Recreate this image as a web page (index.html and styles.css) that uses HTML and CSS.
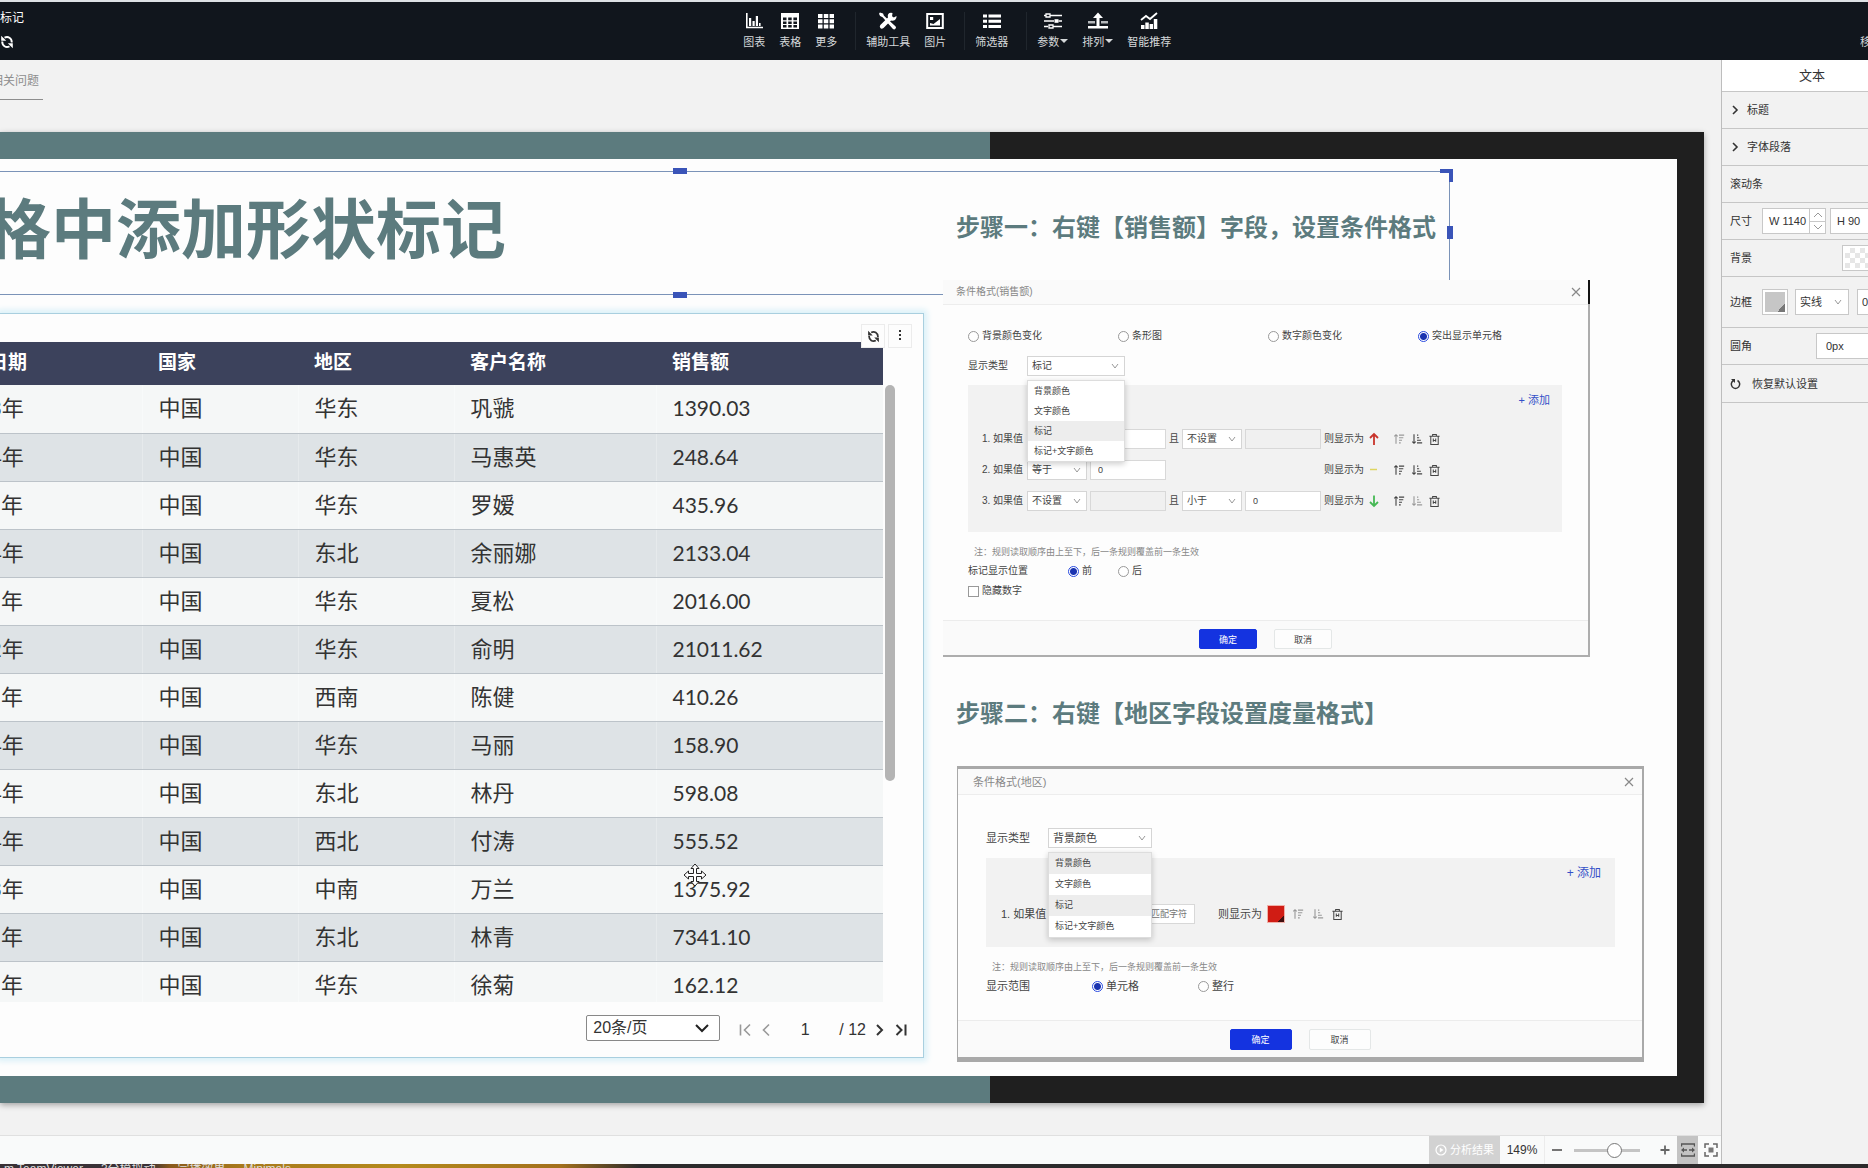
FILE: index.html
```html
<!DOCTYPE html>
<html lang="zh-CN">
<head>
<meta charset="utf-8">
<title>形状标记</title>
<link rel="stylesheet" href="styles.css">
</head>
<body>
<svg class="sprite" aria-hidden="true">
  <symbol id="i-refresh" viewBox="0 0 14 14"><path d="M4.500 2.700C8 1 11.800 3 11.800 7.500M9.500 11.300C6 13 2.200 11 2.200 6.500" fill="none" stroke="currentColor" stroke-width="1.900"/><path d="M1.200.8v5h5zM12.800 13.200v-5h-5z" fill="currentColor"/></symbol>
  <symbol id="i-up" viewBox="0 0 14 14"><path d="M3.500 12.500V2M1.500 4l2-2 2 2M7 2.500h6M7 5.500h5M7 8.500h3.500M7 11.500h2" fill="none" stroke="currentColor" stroke-width="1.300"/></symbol>
  <symbol id="i-down" viewBox="0 0 14 14"><path d="M3.500 1.500V12M1.500 10l2 2 2-2M7 2.500h1.500M7 5.500h2.500M7 8.500h4.500M7 11.500h6" fill="none" stroke="currentColor" stroke-width="1.300"/></symbol>
  <symbol id="i-trash" viewBox="0 0 14 14"><path d="M1.500 3.500h11M5 3.500v-2h4v2M3 3.500v9h8v-9M5.700 6v3.500M8.300 6v3.500M5.500 8h3" fill="none" stroke="currentColor" stroke-width="1.100"/></symbol>
  <symbol id="i-close" viewBox="0 0 10 10"><path d="M1 1l8 8M9 1l-8 8" fill="none" stroke="currentColor" stroke-width="1.200"/></symbol>
  <symbol id="i-right" viewBox="0 0 10 10"><path d="M3 1l4 4-4 4" fill="none" stroke="currentColor" stroke-width="1.600"/></symbol>
</svg>

<header class="topbar">
  <div class="brand">
    <span class="doc-name">标记</span>
    <button class="bare" aria-label="刷新"><svg width="14" height="14"><use href="#i-refresh"/></svg></button>
  </div>
  <nav class="tools">
    <div class="tool-group">
      <button class="tool"><svg width="18" height="18" viewBox="0 0 18 18"><path d="M1.800 1v14.500H18" fill="none" stroke="#fff" stroke-width="1.600"/><path d="M4 6h2.200v8H4zM7.500 9h2.200v5H7.500zM10.800 4H13v10h-2.200zM14 11h1.600v3H14z" fill="#fff"/></svg>图表</button>
      <button class="tool"><svg width="18" height="18" viewBox="0 0 18 18"><path d="M0 1h18v16H0z" fill="#fff"/><path d="M2 5.500h3.500v2.700H2zM7.200 5.500h3.500v2.700H7.200zM12.400 5.500H16v2.700h-3.600zM2 9.400h3.500v2.500H2zM7.200 9.400h3.500v2.500H7.200zM12.400 9.400H16v2.500h-3.600zM2 13.100h3.500v2.400H2zM7.200 13.100h3.500v2.400H7.200zM12.400 13.100H16v2.400h-3.600z" fill="#11161d"/></svg>表格</button>
      <button class="tool"><svg width="18" height="18" viewBox="0 0 18 18"><path d="M1 2h4.500v4H1zM6.800 2h4.500v4H6.800zM12.600 2H17v4h-4.400zM1 7.300h4.500v4H1zM6.800 7.300h4.500v4H6.800zM12.600 7.300H17v4h-4.400zM1 12.600h4.500v4H1zM6.800 12.600h4.500v4H6.800zM12.600 12.600H17v4h-4.400z" fill="#fff"/></svg>更多</button>
    </div>
    <div class="tool-group">
      <button class="tool"><svg width="20" height="20" viewBox="0 0 20 20"><path d="M1 .5l3.500 1.200 1 2.600L18.500 16q1 1.500-.3 2.700t-2.700.1L4 5.800 1.200 4.500 0 2z" fill="#fff"/><path d="M19.500 4.500l-3 1.700-2-1.500.5-3.700q-3.200-.8-4.700 1.200-1 1.800-.3 3.800L1.500 14.500q-1.300 1.700 0 3.400t3.500 0l8.400-8.400q2.200.7 4.400-.6 2-1.800 1.700-4.400z" fill="#fff"/></svg>辅助工具</button>
      <button class="tool"><svg width="18" height="18" viewBox="0 0 18 18"><path d="M1.200 2h15.600v14H1.200z" fill="none" stroke="#fff" stroke-width="2"/><path d="M4 5h3.200v3H4zM4 13v-2l3.500 1L14 7v6.500H4z" fill="#fff"/></svg>图片</button>
    </div>
    <div class="tool-group">
      <button class="tool"><svg width="18" height="18" viewBox="0 0 18 18"><path d="M0 2.500h4v3H0zM5.500 2.500H18v3H5.500zM0 7.700h4v3H0zM5.500 7.700H18v3H5.500zM0 13h4v3H0zM5.500 13H18v3H5.500z" fill="#fff"/></svg>筛选器</button>
    </div>
    <div class="tool-group">
      <button class="tool"><svg width="18" height="18" viewBox="0 0 18 18"><path d="M0 3.500h2M6 3.500h12M0 9h10M14.500 9H18M0 14.500h4M9 14.500h9" stroke="#fff" stroke-width="1.500"/><path d="M2 2h4v3H2zM5 13h4v3H5z" fill="none" stroke="#fff" stroke-width="1.300"/><path d="M10.500 7.200h4v3.600h-4z" fill="#fff"/></svg><span>参数<i class="caret"></i></span></button>
      <button class="tool"><svg width="20" height="18" viewBox="0 0 20 18"><path d="M0 9h7v2.500H0zM13 9h7v2.500h-7z" fill="#b5b8bb"/><path d="M10 .5L5 6h3.500v8h3V6H15zM0 14h20v2.500H0z" fill="#fff"/></svg><span>排列<i class="caret"></i></span></button>
      <button class="tool"><svg width="18" height="18" viewBox="0 0 18 18"><path d="M1 8l5-4 4 3 7-6" fill="none" stroke="#fff" stroke-width="1.800"/><path d="M1 13h3.500v4H1zM5.300 10.500h3.500V17H5.300zM9.600 12H13v5H9.600zM13.800 7h3.500v10h-3.500z" fill="#fff"/></svg>智能推荐</button>
    </div>
  </nav>
  <div class="topbar-end"><span>移</span></div>
</header>

<div class="workspace">
  <main class="stage">
    <div class="tabs"><a class="tab" href="#related"><span>相关问题</span></a></div>

    <div class="slide">
      <div class="sheet">
        <div class="selection"><i class="h top"></i><i class="h bottom"></i><i class="h side"></i><i class="corner"></i></div>

        <section class="left">
          <h1 class="title">格中添加形状标记</h1>
          <div class="widget">
            <div class="widget-tools">
              <button aria-label="刷新"><svg width="13" height="13"><use href="#i-refresh"/></svg></button>
              <button aria-label="更多"><svg width="4" height="14" viewBox="0 0 4 14"><path d="M1 1h2v2H1zM1 5h2v2H1zM1 9h2v2H1z" fill="#333"/></svg></button>
            </div>
            <div class="scroller">
              <table class="data">
                <colgroup><col class="c-year"><col class="c-area"><col class="c-area"><col class="c-name"><col></colgroup>
                <thead><tr><th>日期</th><th>国家</th><th>地区</th><th>客户名称</th><th>销售额</th></tr></thead>
                <tbody>
                  <tr><td>3年</td><td>中国</td><td>华东</td><td>巩虢</td><td>1390.03</td></tr>
                  <tr><td>4年</td><td>中国</td><td>华东</td><td>马惠英</td><td>248.64</td></tr>
                  <tr><td class="bare-year">年</td><td>中国</td><td>华东</td><td>罗嫒</td><td>435.96</td></tr>
                  <tr><td>4年</td><td>中国</td><td>东北</td><td>余丽娜</td><td>2133.04</td></tr>
                  <tr><td class="bare-year">年</td><td>中国</td><td>华东</td><td>夏松</td><td>2016.00</td></tr>
                  <tr><td>2年</td><td>中国</td><td>华东</td><td>俞明</td><td>21011.62</td></tr>
                  <tr><td class="bare-year">年</td><td>中国</td><td>西南</td><td>陈健</td><td>410.26</td></tr>
                  <tr><td>4年</td><td>中国</td><td>华东</td><td>马丽</td><td>158.90</td></tr>
                  <tr><td>4年</td><td>中国</td><td>东北</td><td>林丹</td><td>598.08</td></tr>
                  <tr><td>4年</td><td>中国</td><td>西北</td><td>付涛</td><td>555.52</td></tr>
                  <tr><td>3年</td><td>中国</td><td>中南</td><td>万兰</td><td>1375.92</td></tr>
                  <tr><td class="bare-year">年</td><td>中国</td><td>东北</td><td>林青</td><td>7341.10</td></tr>
                  <tr><td class="bare-year">年</td><td>中国</td><td>华东</td><td>徐菊</td><td>162.12</td></tr>
                </tbody>
              </table>
              <div class="rail"><i></i></div>
            </div>
            <div class="pager">
              <select aria-label="每页条数"><option>20条/页</option></select>
              <button class="bare off" aria-label="首页"><svg width="12" height="14" viewBox="0 0 12 14"><path d="M1.500 1.500v11M11 1.500L5.500 7l5.500 5.500" fill="none" stroke="currentColor" stroke-width="1.600"/></svg></button>
              <button class="bare off" aria-label="上一页"><svg width="12" height="14" viewBox="0 0 12 14"><path d="M9 1.500L3.500 7 9 12.500" fill="none" stroke="currentColor" stroke-width="1.600"/></svg></button>
              <input value="1" aria-label="页码">
              <span>/ 12</span>
              <button class="bare" aria-label="下一页"><svg width="12" height="14" viewBox="0 0 12 14"><path d="M3 2l5 5-5 5" fill="none" stroke="currentColor" stroke-width="2"/></svg></button>
              <button class="bare" aria-label="末页"><svg width="12" height="14" viewBox="0 0 12 14"><path d="M1.500 2l5 5-5 5M10.500 1.500v11" fill="none" stroke="currentColor" stroke-width="2"/></svg></button>
            </div>
          </div>
        </section>

        <section class="right">
          <h2 class="step">步骤一：右键【销售额】字段，设置条件格式</h2>
          <div class="dialog d1">
            <div class="d-head"><span>条件格式(销售额)</span><button class="bare" aria-label="关闭"><svg width="10" height="10"><use href="#i-close"/></svg></button></div>
            <div class="d-body">
              <div class="modes">
                <label><input type="radio" name="mode">背景颜色变化</label>
                <label><input type="radio" name="mode">条形图</label>
                <label><input type="radio" name="mode">数字颜色变化</label>
                <label><input type="radio" name="mode" checked>突出显示单元格</label>
              </div>
              <div class="type-row">
                <label for="type1">显示类型</label>
                <div class="combo">
                  <select id="type1"><option>标记</option></select>
                  <ul class="menu"><li>背景颜色</li><li>文字颜色</li><li class="on">标记</li><li>标记+文字颜色</li></ul>
                </div>
              </div>
              <div class="rules">
                <div class="add"><a href="#add">+ 添加</a></div>
                <div class="rule">
                  <span class="no">1. 如果值</span>
                  <select aria-label="条件"><option></option></select><input aria-label="值">
                  <span>且</span><select aria-label="条件二"><option>不设置</option></select><input aria-label="值二" disabled>
                  <span>则显示为</span><svg class="mark" width="12" height="14" viewBox="0 0 12 14"><path d="M6 13V2.500M2 6l4-4 4 4" fill="none" stroke="#c8332b" stroke-width="1.800"/></svg>
                  <button class="bare off" aria-label="上移"><svg width="12" height="12"><use href="#i-up"/></svg></button><button class="bare" aria-label="下移"><svg width="12" height="12"><use href="#i-down"/></svg></button><button class="bare" aria-label="删除"><svg width="13" height="13"><use href="#i-trash"/></svg></button>
                </div>
                <div class="rule">
                  <span class="no">2. 如果值</span>
                  <select aria-label="条件"><option>等于</option></select><input aria-label="值" value="0">
                  <span class="then">则显示为</span><svg class="mark" width="12" height="14" viewBox="0 0 12 14"><path d="M2 6.500h7" stroke="#dfd560" stroke-width="1.500"/></svg>
                  <button class="bare" aria-label="上移"><svg width="12" height="12"><use href="#i-up"/></svg></button><button class="bare" aria-label="下移"><svg width="12" height="12"><use href="#i-down"/></svg></button><button class="bare" aria-label="删除"><svg width="13" height="13"><use href="#i-trash"/></svg></button>
                </div>
                <div class="rule">
                  <span class="no">3. 如果值</span>
                  <select aria-label="条件"><option>不设置</option></select><input aria-label="值" disabled>
                  <span>且</span><select aria-label="条件二"><option>小于</option></select><input aria-label="值二" value="0">
                  <span>则显示为</span><svg class="mark" width="12" height="14" viewBox="0 0 12 14"><path d="M6 1.500V12M2 8l4 4 4-4" fill="none" stroke="#45b854" stroke-width="1.800"/></svg>
                  <button class="bare" aria-label="上移"><svg width="12" height="12"><use href="#i-up"/></svg></button><button class="bare off" aria-label="下移"><svg width="12" height="12"><use href="#i-down"/></svg></button><button class="bare" aria-label="删除"><svg width="13" height="13"><use href="#i-trash"/></svg></button>
                </div>
              </div>
              <p class="note">注：规则读取顺序由上至下，后一条规则覆盖前一条生效</p>
              <div class="scope"><span>标记显示位置</span><label><input type="radio" name="pos" checked>前</label><label><input type="radio" name="pos">后</label></div>
              <div class="scope"><label><input type="checkbox">隐藏数字</label></div>
            </div>
            <div class="d-foot"><button class="ok">确定</button><button class="cancel">取消</button></div>
          </div>

          <h2 class="step">步骤二：右键【地区字段设置度量格式】</h2>
          <div class="dialog d2">
            <div class="d-head"><span>条件格式(地区)</span><button class="bare" aria-label="关闭"><svg width="10" height="10"><use href="#i-close"/></svg></button></div>
            <div class="d-body">
              <div class="type-row">
                <label for="type2">显示类型</label>
                <div class="combo">
                  <select id="type2"><option>背景颜色</option></select>
                  <ul class="menu"><li class="on">背景颜色</li><li>文字颜色</li><li class="on">标记</li><li>标记+文字颜色</li></ul>
                </div>
              </div>
              <div class="rules">
                <div class="add"><a href="#add2">+ 添加</a></div>
                <div class="rule">
                  <span class="no">1. 如果值</span>
                  <input aria-label="匹配" placeholder="匹配字符">
                  <span>则显示为</span><button class="swatch red" aria-label="颜色"></button>
                  <button class="bare off" aria-label="上移"><svg width="12" height="12"><use href="#i-up"/></svg></button><button class="bare off" aria-label="下移"><svg width="12" height="12"><use href="#i-down"/></svg></button><button class="bare" aria-label="删除"><svg width="13" height="13"><use href="#i-trash"/></svg></button>
                </div>
              </div>
              <p class="note">注：规则读取顺序由上至下，后一条规则覆盖前一条生效</p>
              <div class="scope"><span>显示范围</span><label><input type="radio" name="scope" checked>单元格</label><label><input type="radio" name="scope">整行</label></div>
            </div>
            <div class="d-foot"><button class="ok">确定</button><button class="cancel">取消</button></div>
          </div>
        </section>

        <svg class="pointer" width="24" height="24" viewBox="0 0 24 24"><path d="M12 1l4 4.500h-2.500v5h5V8L23 12l-4.500 4v-2.500h-5v5H16L12 23l-4-4.500h2.500v-5h-5V16L1 12l4.500-4v2.500h5v-5H8z" fill="#fff" stroke="#222" stroke-width="1"/></svg>
      </div>
    </div>

    <footer class="status">
      <button class="result"><svg width="12" height="12" viewBox="0 0 12 12"><circle cx="6" cy="6" r="5" fill="none" stroke="#fff" stroke-width="1.200"/><path d="M4.800 3.500v5L8.500 6z" fill="#fff"/></svg>分析结果</button>
      <span class="zoom">149%</span>
      <button class="bare step-btn" aria-label="缩小"><svg width="12" height="12" viewBox="0 0 12 12"><path d="M1 6h10" stroke="#666" stroke-width="1.800"/></svg></button>
      <input class="slider" type="range" min="0" max="100" value="64" aria-label="缩放">
      <button class="bare step-btn" aria-label="放大"><svg width="12" height="12" viewBox="0 0 12 12"><path d="M1.500 6h9M6 1.500v9" stroke="#666" stroke-width="1.800"/></svg></button>
      <button class="fit on" aria-label="适应宽度"><svg width="14" height="14" viewBox="0 0 14 14"><path d="M.5 3.500V1h13v2.500M.5 10.500V13h13v-2.500M2 7h4M8 7h4" fill="none" stroke="#555" stroke-width="1.400"/><path d="M0 7l3-2.500v5zM14 7l-3-2.500v5z" fill="#555"/></svg></button>
      <button class="fit" aria-label="适应页面"><svg width="14" height="14" viewBox="0 0 14 14"><path d="M1 5V1h4M9 1h4v4M13 9v4H9M5 13H1V9" fill="none" stroke="#666" stroke-width="1.500"/><path d="M4.500 4.500h5v5h-5z" fill="#777"/></svg></button>
    </footer>
  </main>

  <aside class="panel">
    <div class="panel-inner">
      <div class="p-tab">文本</div>
      <div class="p-row fold"><svg width="10" height="10"><use href="#i-right"/></svg>标题</div>
      <div class="p-row fold"><svg width="10" height="10"><use href="#i-right"/></svg>字体段落</div>
      <div class="p-row">滚动条</div>
      <div class="p-row"><span class="p-name">尺寸</span>
        <label class="num">W<input value="1140"><span class="spin"><button aria-label="增加"></button><button aria-label="减少"></button></span></label>
        <label class="num">H<input value="90"></label></div>
      <div class="p-row"><span class="p-name">背景</span><button class="swatch clear" aria-label="背景颜色"></button></div>
      <div class="p-row tall"><span class="p-name">边框</span><button class="swatch grey" aria-label="边框颜色"></button><select aria-label="线型"><option>实线</option></select><input class="px w" value="0px" aria-label="边框宽度"></div>
      <div class="p-row"><label class="p-name" for="radius">圆角</label><input id="radius" class="px" value="0px"></div>
      <div class="p-row reset"><svg width="11" height="12" viewBox="0 0 11 12"><path d="M3.500 2.500a4.200 4.200 0 1 0 4 0" fill="none" stroke="#333" stroke-width="1.500"/><path d="M1 1h4v4z" fill="#333"/></svg>恢复默认设置</div>
    </div>
  </aside>
</div>

<div class="taskbar"><span>m TeamViewer</span><span>3分模拟动-</span><span>完播效果</span><span>Minimals</span></div>
</body>
</html>
```

FILE: styles.css
```css
* { box-sizing: border-box; }
body {
  margin: 0;
  height: 100vh;
  display: flex;
  flex-direction: column;
  overflow: hidden;
  background: #f2f2f2;
  color: #333;
  font: 11px/16px "Liberation Sans", "Noto Sans CJK SC", sans-serif;
}
button, input, select { font: inherit; color: inherit; margin: 0; padding: 0; border-radius: 0; }
svg { display: block; }
.sprite { position: absolute; width: 0; height: 0; }
.bare { border: 0; background: none; display: flex; align-items: center; justify-content: center; }
.off { color: #999; }
select {
  appearance: none;
  border: 1px solid #d5d5d5;
  padding: 0 4px;
  background: #fff url("data:image/svg+xml,%3Csvg xmlns='http://www.w3.org/2000/svg' width='8' height='8'%3E%3Cpath d='M1 2l3 4 3-4' fill='none' stroke='%23999'/%3E%3C/svg%3E") no-repeat right 5px center;
}

/* top bar */
.topbar {
  flex: none;
  height: 60px;
  border-top: 2px solid #dde1e4;
  background: #11161d;
  color: #d5d8da;
  display: flex;
}
.brand { flex: 16; color: #fff; font-size: 12px; display: flex; flex-direction: column; gap: 9px; align-items: flex-start; padding-top: 8px; }
.topbar-end { flex: 15; display: flex; justify-content: flex-end; align-items: center; padding-top: 22px; }
.topbar-end span { width: 8px; overflow: hidden; white-space: nowrap; }
.tools { display: flex; padding-top: 10px; }
.tool-group { display: flex; gap: 14px; height: 38px; }
.tool-group + .tool-group { border-left: 1px solid #20262d; margin-left: 18px; padding-left: 10px; }
.tool { border: 0; background: none; display: flex; flex-direction: column; align-items: center; gap: 4px; line-height: 16px; }
.tool svg { height: 20px; }
.caret { display: inline-block; border: 4px solid transparent; border-top-color: currentColor; border-bottom: 0; vertical-align: 3px; margin-left: 1px; }

/* work area */
.workspace { flex: 1; display: flex; min-height: 0; }
.stage { flex: 1; min-width: 0; display: flex; flex-direction: column; }
.tabs { height: 72px; flex: none; display: flex; align-items: flex-start; }
.tab {
  width: 43px;
  height: 40px;
  padding-right: 4px;
  border-bottom: 1px solid #8e8e8e;
  color: #8e8e8e;
  font-size: 12px;
  line-height: 42px;
  text-decoration: none;
  white-space: nowrap;
  overflow: hidden;
  display: flex;
  justify-content: flex-end;
}
.slide {
  flex: 1;
  min-height: 0;
  margin: 0 17px 32px 0;
  padding: 27px 27px 27px 0;
  background: linear-gradient(90deg, #5c7b7e 58.1%, #1f1f1f 58.1%);
  box-shadow: 0 2px 6px #0005;
  display: flex;
}
.sheet { flex: 1; position: relative; display: flex; gap: 19px; background: #fdfdfd; }
.left { flex: 1; min-width: 0; display: flex; flex-direction: column; padding-bottom: 18px; }
.right { width: 734px; flex: none; padding-top: 12px; position: relative; }
.title {
  margin: 0;
  height: 154px;
  width: 506px;
  padding-top: 18px;
  color: #5c7b7e;
  font: bold 65px/96px "Noto Sans CJK SC", sans-serif;
  white-space: nowrap;
  overflow: hidden;
  display: flex;
  justify-content: flex-end;
}
.step { margin: 0; padding: 37px 0 36px 13px; color: #5c7b7e; font: bold 24px/36px "Noto Sans CJK SC", sans-serif; white-space: nowrap; }

/* selected text component outline */
.selection { position: absolute; left: 0; right: 227px; top: 12px; height: 124px; border: 1px solid #7b93b8; border-left: 0; }
.selection i { position: absolute; background: #3a54b8; }
.selection .top { width: 14px; height: 6px; left: 673px; top: -4px; }
.selection .bottom { width: 14px; height: 6px; left: 673px; bottom: -4px; }
.selection .side { width: 6px; height: 13px; right: -4px; top: 54px; }
.selection .corner { width: 13px; height: 13px; right: -4px; top: -3px; background: none; border: solid #3a54b8; border-width: 4px 4px 0 0; }

/* table component */
.widget {
  flex: 1;
  min-height: 0;
  position: relative;
  border: 1px solid #a9cfdf;
  border-left: 0;
  box-shadow: 0 0 6px 3px #d9f0f8;
  background: #fdfdfd;
  padding-top: 28px;
  display: flex;
  flex-direction: column;
}
.widget-tools { position: absolute; z-index: 1; right: 11px; top: 10px; display: flex; gap: 3px; }
.widget-tools button { width: 24px; height: 24px; border: 1px solid #ececec; background: #fdfdfd; display: flex; align-items: center; justify-content: center; }
.scroller { flex: 1; min-height: 0; overflow: hidden; display: flex; padding-right: 28px; }
.data { flex: 1; margin-left: -11px; table-layout: fixed; border-collapse: collapse; text-align: left; }
.c-year { width: 153px; }
.c-area { width: 156px; }
.c-name { width: 202px; }
.data th { height: 43px; padding: 0 0 6px 16px; background: #3c425c; color: #fff; font: bold 19px/28px "Noto Sans CJK SC", sans-serif; }
.data td { height: 48px; padding: 0 0 1px 16px; border-bottom: 1px solid #bcc3c9; border-left: 1px solid #f0f3f4; font: 22px/32px Lato, "Noto Sans CJK SC", sans-serif; }
.data td:last-child { font-size: 21px; }
.data th:first-child, .data td:first-child { padding-left: 0; border-left: 0; }
.data td.bare-year:first-child { padding-left: 12px; }
.data tr:nth-child(odd) td { background: #f5f7f7; border-left-color: #f8fafa; }
.data tr:nth-child(even) td { background: #dee3e6; border-left-color: #e6eaec; }
.rail { flex: none; width: 12px; padding: 43px 0 0 2px; }
.rail i { display: block; width: 10px; height: 396px; border-radius: 5px; background: #b4b4b4; }
.pager { flex: none; height: 55px; padding: 13px 16px 0 0; display: flex; justify-content: flex-end; align-items: flex-start; font-size: 16px; line-height: 30px; }
.pager select {
  width: 134px;
  height: 26px;
  line-height: 24px;
  border: 1px solid #888;
  border-radius: 2px;
  padding-left: 6px;
  margin-right: 19px;
  background-image: url("data:image/svg+xml,%3Csvg xmlns='http://www.w3.org/2000/svg' width='14' height='10'%3E%3Cpath d='M1 2l6 6 6-6' fill='none' stroke='%23222' stroke-width='2'/%3E%3C/svg%3E");
  background-position: right 10px center;
}
.pager button { width: 12px; height: 30px; margin-left: 8px; }
.pager select + button { margin-left: 0; }
.pager button + button { margin-left: 9px; }
.pager input { width: 30px; height: 30px; border: 0; background: none; text-align: center; margin: 0 19px 0 18px; }

/* condition dialogs */
.dialog { position: relative; background: #fdfdfd; color: #444; display: flex; flex-direction: column; line-height: 20px; }
.d-head { display: flex; align-items: center; justify-content: space-between; background: #fafafa; border-bottom: 1px solid #ededed; color: #888; }
.d-foot { display: flex; justify-content: center; gap: 17px; padding-top: 8px; background: #fafafa; border-top: 1px solid #ececec; }
.d-foot button { border: 1px solid #e4e7e7; border-radius: 2px; font-size: 9px; background: #fdfdfd; }
.d-foot .ok { border-color: #1433e0; background: #1433e0; color: #fff; }
.d1 { height: 377px; margin: 0 87px 0 0; font-size: 10px; border: solid #adadad; border-width: 0 2px 2px 0; }
.d1::after { content: ""; position: absolute; right: -2px; top: 0; width: 2px; height: 24px; background: #111; }
.d1 .d-head { height: 25px; padding: 0 7px 0 13px; }
.d1 .d-body { flex: 1; padding: 21px 26px 0 25px; }
.d1 .d-foot { height: 35px; }
.d1 .d-foot button { width: 58px; height: 20px; }
.d2 { height: 296px; margin: 0 33px 0 14px; font-size: 11px; border: solid #a9a9a9; border-width: 3px 2px 5px 1px; }
.d2 .d-head { height: 26px; padding: 0 8px 0 15px; }
.d2 .d-body { flex: 1; padding: 33px 27px 0 28px; }
.d2 .d-foot { height: 37px; }
.d2 .d-foot button { width: 62px; height: 21px; }
.modes { display: grid; grid-template-columns: repeat(4, 150px); white-space: nowrap; margin-bottom: 10px; }
.dialog label { display: flex; align-items: center; gap: 3px; }
.dialog input[type=radio], .dialog input[type=checkbox] { appearance: none; flex: none; width: 11px; height: 11px; border: 1px solid #999; background: #fff; }
.dialog input[type=radio] { border-radius: 50%; }
.dialog input[type=radio]:checked { border-color: #2a4be0; background: radial-gradient(circle, #1a33b0 3px, #fff 4px); }
.type-row { display: flex; }
.type-row label { width: 59px; }
.combo { position: relative; width: 98px; }
.combo select { display: block; width: 100%; height: 20px; line-height: 18px; }
.menu { position: absolute; z-index: 2; left: 0; right: 0; top: 24px; margin: 0; padding: 0; list-style: none; font-size: 9px; background: #fff; border: 1px solid #ddd; box-shadow: 0 2px 6px #0003; }
.menu li { height: 20px; padding-left: 6px; }
.menu .on { background: #ededed; }
.d2 .type-row label { width: 62px; }
.d2 .combo { width: 104px; }
.d2 .menu li { height: 21px; }
.rules { margin-top: 9px; background: #f2f2f2; }
.add { height: 30px; padding-right: 12px; text-align: right; line-height: 30px; font-size: 11px; }
.add a { color: #3450c8; text-decoration: none; }
.rule { display: grid; align-items: center; white-space: nowrap; }
.rule select, .rule input { width: 100%; height: 20px; line-height: 18px; }
.rule input { border: 1px solid #d8d8d8; background: #fff; padding: 0 7px; font-size: 9px; }
.rule input:disabled { background: #f0f0f0; }
.d1 .rules { padding-bottom: 21px; }
.d1 .add { margin-bottom: 14px; }
.d1 .rule { grid-template-columns: 42px 60px 76px 10px 60px 76px 41px 20px 15px 15px 15px; column-gap: 3px; padding-left: 14px; }
.d1 .rule + .rule { margin-top: 11px; }
.d1 .then { grid-column: 7; }
.d2 .rules { margin-top: 10px; padding-bottom: 23px; }
.d2 .add { font-size: 12px; padding-right: 14px; margin-bottom: 16px; }
.d2 .rule { grid-template-columns: 42px 147px 62px 18px 15px 15px 15px; padding-left: 15px; column-gap: 5px; }
.d2 .rule input { padding-left: 102px; }
.d2 .rule input + span { margin-left: 18px; }
.note { margin: 13px 0 2px 6px; font-size: 9px; line-height: 14px; color: #888; }
.scope { display: flex; }
.d1 .scope span { width: 100px; }
.d1 .scope label { width: 50px; white-space: nowrap; }
.d2 .scope span, .d2 .scope label { width: 106px; }
.swatch { width: 26px; height: 26px; border: 1px solid #c8c8c8; background: #fff; }
.red { width: 18px; height: 18px; border: 1px solid #f0b0a8; background: linear-gradient(135deg, #d01c14 80%, #401010 80%); }

/* cursor over the canvas */
.pointer { position: absolute; left: 683px; top: 704px; }

/* status bar */
.status { flex: none; height: 29px; border-top: 1px solid #e0e0e0; background: #f9fafa; display: flex; align-items: center; justify-content: flex-end; }
.result { width: 71px; height: 28px; border: 0; background: #d2d2d2; color: #fff; display: flex; align-items: center; justify-content: center; gap: 3px; }
.zoom { width: 45px; text-align: center; font-size: 12px; border-right: 1px solid #ececec; line-height: 28px; }
.step-btn { width: 24px; height: 28px; }
.slider { appearance: none; width: 66px; height: 15px; margin: 0 13px 0 5px; background: linear-gradient(#c4c4c4, #c4c4c4) no-repeat center / 100% 3px; }
.slider::-webkit-slider-thumb { appearance: none; width: 15px; height: 15px; border: 1px solid #777; border-radius: 50%; background: #fff; }
.fit { width: 21px; height: 28px; border: 0; background: none; display: flex; align-items: center; justify-content: center; }
.fit:last-child { margin-left: 2px; }
.fit.on { background: #c3c3c3; }

/* property panel, wider than the visible strip */
.panel { flex: none; width: 147px; border-left: 1px solid #bdbdbd; overflow: hidden; }
.panel-inner { width: 180px; }
.p-tab { height: 32px; border-bottom: 1px solid #c6c6c6; background: #fff; text-align: center; font-size: 13px; line-height: 31px; }
.p-row { height: 37px; border-bottom: 1px solid #c6c6c6; padding-left: 8px; display: flex; align-items: center; }
.p-row.tall { height: 51px; }
.fold { gap: 7px; }
.reset { gap: 11px; height: 38px; }
.p-name { width: 32px; flex: none; }
.num { flex: none; height: 26px; width: 64px; border: 1px solid #c8c8c8; background: #fff; display: flex; align-items: center; padding-left: 6px; margin-right: 4px; }
.num input { border: 0; background: none; padding: 0 0 0 3px; flex: 1; width: 28px; min-width: 0; }
.spin { display: flex; flex: none; flex-direction: column; width: 16px; height: 24px; border-left: 1px solid #c8c8c8; }
.spin button { flex: 1; border: 0; background: url("data:image/svg+xml,%3Csvg xmlns='http://www.w3.org/2000/svg' width='10' height='6'%3E%3Cpath d='M1 5l4-4 4 4' fill='none' stroke='%23999'/%3E%3C/svg%3E") no-repeat center; }
.spin button + button { border-top: 1px solid #c8c8c8; background-image: url("data:image/svg+xml,%3Csvg xmlns='http://www.w3.org/2000/svg' width='10' height='6'%3E%3Cpath d='M1 1l4 4 4-4' fill='none' stroke='%23999'/%3E%3C/svg%3E"); }
.clear { margin-left: 80px; width: 60px; background: repeating-conic-gradient(#e6e6e6 0 25%, #fff 0 50%) 0 0 / 10px 10px content-box, #fff; padding: 2px; }
.grey { flex: none; background: linear-gradient(135deg, #c6c6c6 80%, #777 80%) content-box, #fff; padding: 2px; margin-right: 7px; }
.p-row select { flex: none; width: 54px; height: 26px; line-height: 24px; margin-right: 8px; border-color: #c8c8c8; background-position: right 6px center; }
.px { width: 70px; height: 26px; border: 1px solid #c8c8c8; background: #fff; padding-left: 9px; margin-left: 54px; }
.px.w { margin-left: 0; width: 40px; padding-left: 4px; }

.taskbar {
  flex: none;
  height: 4px;
  padding-left: 4px;
  overflow: hidden;
  display: flex;
  gap: 18px;
  color: #ddd;
  font-size: 12px;
  line-height: 10px;
  background: linear-gradient(90deg, #3a3136 0 150px, #8a5a1c 170px, #a8791c 240px, #b48a1c 400px, #a3701c 560px, #2c2a2b 640px);
}
```
